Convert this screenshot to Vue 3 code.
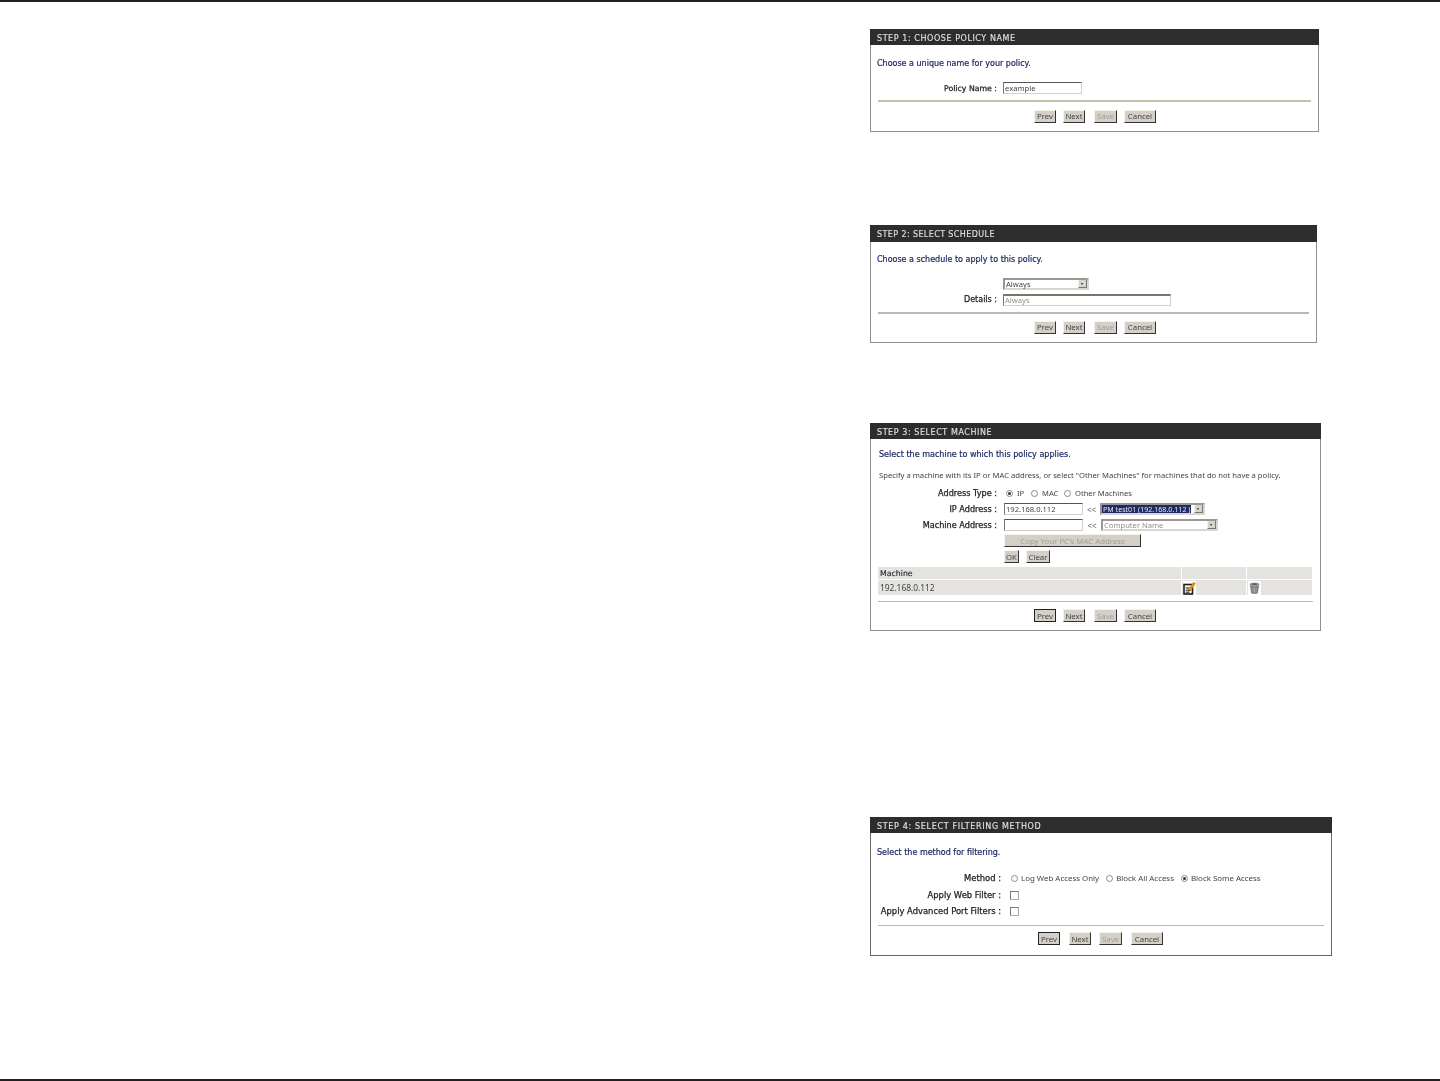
<script setup>
const btns = ['Prev', 'Next', 'Save', 'Cancel']
</script>

<template>
  <div class="page">
    <section class="panel p1">
      <h2>STEP 1: CHOOSE POLICY NAME</h2>
      <p class="title">Choose a unique name for your policy.</p>
      <div class="row r1"><label>Policy Name :</label><span class="field w79">example</span></div>
      <hr class="tan" />
      <div class="actions a1">
        <button v-for="b in btns" :key="b" :class="['b-' + b, { off: b === 'Save' }]">{{ b }}</button>
      </div>
    </section>

    <section class="panel p2">
      <h2>STEP 2: SELECT SCHEDULE</h2>
      <p class="title">Choose a schedule to apply to this policy.</p>
      <div class="row r2a"><label></label><span class="select w86">Always<i class="arrow"></i></span></div>
      <div class="row r2b"><label>Details :</label><span class="field w168 dim">Always</span></div>
      <hr class="tan grey" />
      <div class="actions a2">
        <button v-for="b in btns" :key="b" :class="['b-' + b, { off: b === 'Save' }]">{{ b }}</button>
      </div>
    </section>

    <section class="panel p3">
      <h2>STEP 3: SELECT MACHINE</h2>
      <p class="title t3">Select the machine to which this policy applies.</p>
      <p class="spec">Specify a machine with its IP or MAC address, or select "Other Machines" for machines that do not have a policy.</p>
      <div class="row r3"><label>Address Type :</label>
        <span class="opts o3"><i class="radio on"></i><span class="o-ip">IP</span><i class="radio"></i><span class="o-mac">MAC</span><i class="radio"></i><span>Other Machines</span></span>
      </div>
      <div class="row r3"><label>IP Address :</label><span class="field w79">192.168.0.112</span><span class="ll">&lt;&lt;</span>
        <span class="select w105"><b>PM test01 (192.168.0.112 )</b><i class="arrow"></i></span></div>
      <div class="row r3"><label>Machine Address :</label><span class="field w79"></span><span class="ll l2">&lt;&lt;</span>
        <span class="select w117 dim">Computer Name<i class="arrow"></i></span></div>
      <div class="stack">
        <button class="off copy">Copy Your PC's MAC Address</button>
        <div class="okrow"><button class="ok">OK</button><button class="clear">Clear</button></div>
      </div>
      <div class="tbl">
        <div class="cell head">Machine</div><div class="cell head"></div><div class="cell head"></div>
        <div class="cell data">192.168.0.112</div>
        <div class="cell data icon">
          <svg width="13" height="14" viewBox="0 0 13 14"><rect width="13" height="14" fill="#fff"/><rect x="1" y="3.5" width="8.5" height="9.5" fill="#f4f2ea" stroke="#1c1c1c" stroke-width="1.6"/><path d="M2.8 7h4M2.8 9.2h5M2.8 11.2h3.5" stroke="#1c1c1c" stroke-width="1"/><path d="M5.6 8 10.6.8l2.2 1.6L7.8 9.6 5.2 10.4z" fill="#e8861a"/><path d="M5.6 8.6l-.4 1.8 1.9-.6z" fill="#3a2a10"/></svg>
        </div>
        <div class="cell data icon">
          <svg width="13" height="14" viewBox="0 0 13 14"><rect width="13" height="14" fill="#fff"/><ellipse cx="6.5" cy="3.4" rx="5" ry="2" fill="#a3a3a3"/><ellipse cx="6.5" cy="3.2" rx="3" ry=".9" fill="#5e5e5e"/><path d="M2 4.6c2.6 1 6.4 1 9 0l-1.2 7.6c-1.6.9-5 .9-6.6 0z" fill="#7d7d7d"/><path d="M4.8 6.4l.3 5.2M6.5 6.6v5.2M8.2 6.4l-.3 5.2" stroke="#b4b4b4" stroke-width=".7"/></svg>
        </div>
      </div>
      <hr class="tan grey t3hr" />
      <div class="actions a3">
        <button v-for="b in btns" :key="b" :class="['b-' + b, { off: b === 'Save', dark: b === 'Prev' }]">{{ b }}</button>
      </div>
    </section>

    <section class="panel p4">
      <h2>STEP 4: SELECT FILTERING METHOD</h2>
      <p class="title">Select the method for filtering.</p>
      <div class="row r4a"><label>Method :</label>
        <span class="opts o4"><i class="radio"></i><span class="m1">Log Web Access Only</span><i class="radio"></i><span class="m2">Block All Access</span><i class="radio on"></i><span>Block Some Access</span></span>
      </div>
      <div class="row r4b"><label>Apply Web Filter :</label><i class="check"></i></div>
      <div class="row r4b"><label>Apply Advanced Port Filters :</label><i class="check"></i></div>
      <hr class="tan grey t4hr" />
      <div class="actions a4">
        <button v-for="b in btns" :key="b" :class="['b-' + b, { off: b === 'Save', dark: b === 'Prev' }]">{{ b }}</button>
      </div>
    </section>
  </div>
</template>

<style>
html, body { margin: 0; background: #fff; }
</style>

<style scoped>
.page {
  box-sizing: border-box;
  height: 1081px;
  border-top: 2px solid #231f20;
  border-bottom: 2px solid #231f20;
  padding: 27px 0 0 870px;
  display: flex;
  flex-direction: column;
  align-items: flex-start;
  font-family: "Noto Sans", sans-serif;
  font-size: 8px;
  color: #333;
}
.panel {
  box-sizing: border-box;
  border: 1px solid #8e8e8e;
  border-top: 0;
  background: #fff;
  filter: blur(.3px);
}
.p1 { width: 449px; height: 103px; }
.p2 { width: 447px; height: 118px; margin-top: 93px; }
.p3 { width: 451px; height: 208px; margin-top: 80px; }
.p4 { width: 462px; height: 139px; margin-top: 186px; border-color: #666; }
h2 {
  margin: 0 -1px;
  height: 16px;
  padding-left: 7px;
  background: #2d2d2d;
  color: #e2e2e2;
  font: 400 8px/19px "DejaVu Sans", sans-serif;
  -webkit-text-stroke: .12px #e2e2e2;
  letter-spacing: .57px;
  white-space: nowrap;
}
.p2 h2 { height: 17px; line-height: 20px; letter-spacing: .4px; }
.p4 h2 { letter-spacing: .67px; }
.title {
  margin: 0;
  padding: 13px 0 0 6px;
  height: 12px;
  color: #1d2a62;
  font: 8px/12px "DejaVu Sans", sans-serif;
  -webkit-text-stroke: .2px #1d2a62;
  white-space: nowrap;
}
.p2 .title { padding-top: 12px; }
.p3 .t3 { padding: 10px 0 0 8px; font-size: 8.05px; }
.p4 .title { padding-top: 14px; }
.spec { margin: 0; padding: 8px 0 0 8px; height: 12px; line-height: 12px; white-space: nowrap; font-size: 7.66px; color: #444; }
.row { display: flex; align-items: center; height: 16px; white-space: nowrap; }
.row label {
  width: 126px; text-align: right; margin-right: 6px; flex: none; color: #222;
  font: 7.8px "DejaVu Sans", sans-serif;
  -webkit-text-stroke: .25px #222;
}
.r1 { margin-top: 10px; }
.r2a { margin-top: 10px; height: 15px; }
.r2b { height: 15px; margin-top: 1px; }
.p2 label { font-size: 8px; }
.spec + .r3 { margin-top: 4px; }
.r3 label { margin-right: 7px; font-size: 8.15px; }
.r4a { margin-top: 10px; height: 18px; }
.p4 label { width: 130px; margin-right: 10px; font-size: 8.4px; }
.r4b { height: 16px; }
.field, .select {
  box-sizing: border-box;
  display: inline-flex;
  align-items: center;
  height: 12px;
  padding-left: 1px;
  background: #fff;
  border: 1px solid #d4d0c8;
  border-top: 1px solid #555;
  border-left: 1px solid #777;
  font-size: 7.6px;
  color: #444;
  position: relative;
  flex: none;
}
.select { border: 2px solid #9a9890; border-right-color: #d8d6cf; border-bottom-color: #d8d6cf; }
.w79 { width: 79px; }
.w168 { width: 168px; border-top: 2px solid #77756e; }
.w86 { width: 86px; }
.w105 { width: 105px; overflow: hidden; }
.w117 { width: 117px; }
.dim { color: #8f8f8f; }
.arrow {
  position: absolute; right: 0; top: 0; bottom: 0; width: 9px;
  background: #d8d5cd;
  border-right: 1px solid #777; border-bottom: 1px solid #777;
  border-left: 1px solid #f4f2ec;
  box-sizing: border-box;
}
.arrow::after {
  content: ""; position: absolute; left: 2px; top: 3px;
  border: 1.5px solid transparent; border-top: 2px solid #222; border-bottom: 0;
}
.select b { background: #1f2a66; color: #e8e8f0; font-weight: 400; padding: 0 1px; font-size: 7.1px; line-height: 8px; margin-left: -1px; white-space: nowrap; }
.ll { width: 17px; text-align: center; flex: none; color: #666; }
.l2 { width: 18px; }
.opts { display: inline-flex; align-items: center; color: #444; }
.radio {
  box-sizing: border-box; width: 7px; height: 7px; border-radius: 50%;
  border: 1px solid #8a8a8a; background: #fff; flex: none; position: relative; margin-right: 4px;
}
.radio.on::after { content: ""; position: absolute; left: 1px; top: 1px; width: 3px; height: 3px; border-radius: 50%; background: #333; }
.o3 { margin-left: 2px; font-size: 7.6px; }
.o-ip { margin-right: 6px; width: 8px; }
.o-mac { margin-right: 6px; width: 16px; }
.o4 { font-size: 7.9px; }
.o4 .radio { margin-right: 3px; }
.m1 { margin-right: 7px; }
.m2 { margin-right: 7px; }
.check { box-sizing: border-box; width: 9px; height: 9px; margin-left: -1px; border: 1px solid #aaa; border-top-color: #777; border-left-color: #777; background: #fff; }
hr.tan { margin: 4px 7px 0; border: 0; height: 1.5px; background: #c4c1aa; }
hr.grey { background: #b9b9b4; }
.p2 hr { margin-top: 5px; }
.p3 hr { margin-top: 6px; height: 1px; }
.p4 hr { margin-top: 6px; height: 1px; }
.actions { display: flex; align-items: center; }
.a1 { padding: 8px 0 0 163px; }
.a2 { padding: 7px 0 0 163px; }
.a3 { padding: 7px 0 0 163px; }
.a4 { padding: 6px 0 0 167px; }
button {
  box-sizing: border-box;
  height: 13px;
  padding: 0;
  background: #d4d0c8;
  border: 1px solid #f4f2ec;
  border-right: 1px solid #333;
  border-bottom: 1px solid #333;
  font: 7.8px "Noto Sans", sans-serif;
  color: #444;
  flex: none;
}
.b-Prev { width: 22px; margin-right: 7px; }
.b-Next { width: 22px; margin-right: 9px; }
.b-Save { width: 23px; margin-right: 7px; }
.b-Cancel { width: 32px; }
.a4 .b-Prev { margin-right: 9px; }
.a4 .b-Next { margin-right: 8px; }
.a4 .b-Save { margin-right: 9px; }
button.off { color: #a09e98; }
button.dark { border-color: #222; }
.stack { padding-left: 133px; margin-top: 1px; }
button.copy { display: block; width: 137px; height: 13px; }
.okrow { display: flex; margin-top: 3px; }
.ok { width: 15px; margin-right: 7px; }
.clear { width: 24px; }
.tbl {
  display: grid;
  grid-template-columns: 303px 64px 65px;
  gap: 1px;
  margin: 4px 0 0 7px;
  width: 434px;
}
.cell { background: #e4e3e0; padding-left: 2px; display: flex; align-items: center; }
.icon { padding-left: 1px; }
.head { height: 12px; font: 7.8px "DejaVu Sans", sans-serif; color: #222; -webkit-text-stroke: .12px #222; }
.data { height: 15px; color: #444; font-size: 8.4px; }
</style>
